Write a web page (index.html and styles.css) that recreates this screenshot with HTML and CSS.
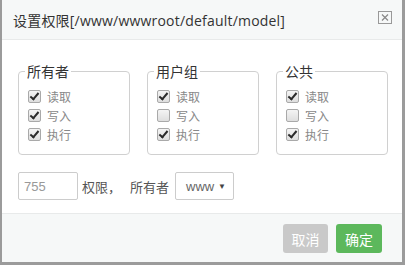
FILE: index.html
```html
<!DOCTYPE html>
<html>
<head>
<meta charset="utf-8">
<link rel="stylesheet" href="styles.css">
</head>
<body>
<div class="modal">
  <div class="modal-header">
    <span class="modal-title">设置权限[/www/wwwroot/default/model]</span>
    <span class="close">
      <svg width="14" height="13" viewBox="0 0 14 13"><rect x="0.5" y="0.5" width="13" height="12" fill="none" stroke="#999"/><path d="M4 3.5 L10 9.5 M10 3.5 L4 9.5" stroke="#888" stroke-width="1.2"/></svg>
    </span>
  </div>
  <div class="modal-body">
    <div class="groups">
      <fieldset class="group">
        <legend>所有者</legend>
        <label class="row"><span class="cb checked"></span>读取</label>
        <label class="row"><span class="cb checked"></span>写入</label>
        <label class="row"><span class="cb checked"></span>执行</label>
      </fieldset>
      <fieldset class="group">
        <legend>用户组</legend>
        <label class="row"><span class="cb checked"></span>读取</label>
        <label class="row"><span class="cb"></span>写入</label>
        <label class="row"><span class="cb checked"></span>执行</label>
      </fieldset>
      <fieldset class="group">
        <legend>公共</legend>
        <label class="row"><span class="cb checked"></span>读取</label>
        <label class="row"><span class="cb"></span>写入</label>
        <label class="row"><span class="cb checked"></span>执行</label>
      </fieldset>
    </div>
    <div class="perm-row">
      <span class="input">755</span>
      <span class="lbl">权限，</span>
      <span class="lbl owner">所有者</span>
      <span class="select">www<span class="arrow">▼</span></span>
    </div>
  </div>
  <div class="modal-footer">
    <span class="btn btn-cancel">取消</span>
    <span class="btn btn-ok">确定</span>
  </div>
</div>
</body>
</html>
```
FILE: styles.css
```css
html, body {
  margin: 0;
  padding: 0;
}
body {
  background: #9b9b9b;
  width: 405px;
  height: 265px;
  overflow: hidden;
  font-family: "Open Sans", "Noto Sans CJK SC", sans-serif;
}
.modal {
  margin-left: 2px;
  width: 400px;
  height: 262px;
  background: #fff;
  display: flex;
  flex-direction: column;
}
.modal-header {
  height: 40px;
  flex: none;
  box-sizing: border-box;
  border-bottom: 1px solid #e8eaea;
  background: #f6f8f8;
  display: flex;
  align-items: center;
  justify-content: space-between;
  padding: 0 10px 0 11px;
}
.modal-title {
  font-size: 14px;
  color: #333;
  letter-spacing: 0.2px;
}
.close {
  display: flex;
  margin-top: -4px;
}
.modal-body {
  flex: 1;
  padding: 22px 14px 0 16px;
}
.groups {
  display: flex;
  gap: 17px;
}
.group {
  width: 112px;
  box-sizing: border-box;
  margin: 0;
  padding: 7px 8px 10px 9px;
  border: 1px solid #d0d0d0;
  border-radius: 4px;
}
.group legend {
  font-size: 14px;
  color: #333;
  padding: 0 2px;
  margin-left: -3px;
  line-height: 18px;
  font-family: "Noto Sans CJK SC", sans-serif;
}
.row {
  display: flex;
  align-items: center;
  height: 19px;
  font-size: 12px;
  color: #888;
  font-family: "Noto Sans CJK SC", sans-serif;
}
.cb {
  width: 11px;
  height: 11px;
  border: 1px solid #a9a9a9;
  border-radius: 2px;
  background: linear-gradient(#f4f4f4, #dedede);
  margin-right: 6px;
  position: relative;
}
.cb.checked::after {
  content: "";
  position: absolute;
  left: 3px;
  top: 0px;
  width: 3px;
  height: 7px;
  border: solid #2a2a2a;
  border-width: 0 2px 2px 0;
  transform: rotate(40deg);
}
.perm-row {
  display: flex;
  align-items: center;
  margin-top: 17px;
  height: 28px;
}
.input {
  width: 60px;
  height: 28px;
  box-sizing: border-box;
  border: 1px solid #ccc;
  border-radius: 2px;
  color: #999;
  padding-left: 5px;
  display: flex;
  align-items: center;
  font-family: "Liberation Sans", sans-serif;
  font-size: 13px;
}
.lbl {
  font-size: 13px;
  color: #555;
  margin-left: 4px;
  font-family: "Noto Sans CJK SC", sans-serif;
}
.lbl.owner {
  margin-left: 9px;
}
.select {
  margin-left: 6px;
  width: 59px;
  height: 28px;
  box-sizing: border-box;
  border: 1px solid #ccc;
  border-radius: 2px;
  display: flex;
  align-items: center;
  justify-content: space-between;
  padding: 0 7px 0 10px;
  font-size: 13px;
  color: #666;
  font-family: "Liberation Sans", sans-serif;
}
.arrow {
  font-size: 8px;
  color: #444;
}
.modal-footer {
  height: 49px;
  flex: none;
  box-sizing: border-box;
  border-top: 1px solid #e8eaea;
  background: #f6f8f8;
  display: flex;
  justify-content: flex-end;
  align-items: flex-start;
  gap: 8px;
  padding: 10px 20px 0 0;
}
.btn {
  height: 29px;
  border-radius: 3px;
  font-size: 14px;
  color: #fff;
  display: flex;
  align-items: center;
  justify-content: center;
  box-sizing: border-box;
  white-space: nowrap;
  font-family: "Noto Sans CJK SC", sans-serif;
}
.btn-cancel {
  background: #c9c9c9;
  width: 45px;
}
.btn-ok {
  background: #5cb85c;
  width: 46px;
}
```
